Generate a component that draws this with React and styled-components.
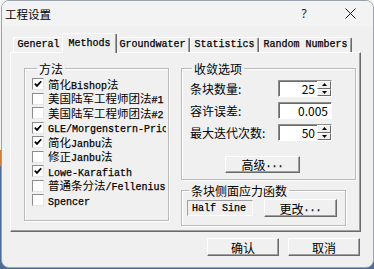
import React from 'react';
import styled, { createGlobalStyle } from 'styled-components';

const GlobalStyle = createGlobalStyle`
  html, body { margin: 0; padding: 0; }
  body {
    width: 374px;
    height: 269px;
    overflow: hidden;
    background: linear-gradient(180deg, #f4f4f4 0, #f4f4f4 150px, #c9803f 150px, #c9803f 166px, #4d6c93 166px);
    font-family: "Noto Sans CJK SC", "Noto Sans", sans-serif;
  }
`;

const Window = styled.div`
  box-sizing: border-box;
  margin-left: 1px;
  width: 373px;
  height: 268px;
  background: #f0f0f0;
  border: 1px solid #9aa3ad;
  border-radius: 8px;
  overflow: hidden;
  display: flex;
  flex-direction: column;
`;

const TitleBar = styled.div`
  flex: none;
  height: 25px;
  display: flex;
  align-items: center;
  background: #f3f3f3;
`;

const Title = styled.div`
  flex: 1;
  padding-left: 3px;
  font-family: "Noto Sans CJK SC", sans-serif;
  font-size: 11.5px;
  color: #000;
`;

const CaptionButton = styled.div`
  width: 46px;
  height: 100%;
  display: flex;
  align-items: center;
  justify-content: center;
  font-family: "Noto Sans", sans-serif;
  font-size: 12px;
  color: #1a1a1a;
`;

const Body = styled.div`
  padding: 7px 0 0 8px;
  display: flex;
  flex-direction: column;
`;

const TabStrip = styled.div`
  position: relative;
  z-index: 1;
  height: 19px;
  display: flex;
  align-items: flex-end;
  padding-left: 3px;
`;

const Tab = styled.div`
  box-sizing: border-box;
  height: ${p => (p.$active ? 20 : 15)}px;
  margin: 0 ${p => (p.$active ? -2 : 0)}px ${p => (p.$active ? -1 : 0)}px;
  padding: 0 ${p => (p.$active ? 5.5 : 3.5)}px 1px;
  display: flex;
  align-items: center;
  background: #f0f0f0;
  border-top: 1px solid #ffffff;
  border-left: 1px solid #ffffff;
  border-right: 1px solid #696969;
  box-shadow: inset -1px 0 0 #a0a0a0;
  border-radius: 2px 2px 0 0;
  position: relative;
  z-index: ${p => (p.$active ? 2 : 1)};
  font-family: "Liberation Mono", monospace;
  font-size: 10px;
  -webkit-text-stroke: 0.25px #000;
  color: #000;
  white-space: nowrap;
`;

const Panel = styled.div`
  box-sizing: border-box;
  width: 351px;
  height: 180px;
  border: 1px solid;
  border-color: #ffffff #696969 #696969 #ffffff;
  box-shadow: inset -1px -1px 0 #a0a0a0;
  padding: 9px 0 0 13px;
  display: flex;
  align-items: flex-start;
  gap: 12px;
`;

const Group = styled.fieldset`
  box-sizing: border-box;
  margin: 0;
  min-width: 0;
  min-inline-size: 0;
  width: ${p => p.$w}px;
  height: ${p => p.$h}px;
  padding: ${p => p.$pad};
  border: 1px solid #b9b9b9;
  box-shadow: 1px 1px 0 #ffffff, inset 1px 1px 0 #ffffff;
`;

const Legend = styled.legend`
  margin-left: ${p => p.$ml || 5}px;
  padding: 0 2px;
  font-family: "Noto Sans CJK SC", sans-serif;
  font-size: 12px;
  line-height: 13px;
  color: #000;
`;

const CheckRow = styled.div`
  height: 14.5px;
  display: flex;
  align-items: center;
  gap: 4px;
`;

const Box = styled.span`
  box-sizing: border-box;
  flex: none;
  width: 12px;
  height: 12px;
  background: #ffffff;
  border: 1px solid;
  border-color: #8d8d8d #e6e6e6 #e6e6e6 #8d8d8d;
  display: flex;
  align-items: center;
  justify-content: center;
`;

const Label = styled.span`
  flex: 1;
  min-width: 0;
  max-width: 118px;
  overflow: hidden;
  white-space: nowrap;
  color: #000;
  line-height: 14px;
`;

const Cjk = styled.span`
  font-family: "Noto Sans CJK SC", sans-serif;
  font-size: ${p => p.$size || 11.5}px;
`;

const Latin = styled.span`
  font-family: "Liberation Mono", monospace;
  font-size: 10px;
  -webkit-text-stroke: 0.25px #000;
`;

const RightCol = styled.div`
  width: 175px;
  display: flex;
  flex-direction: column;
  gap: 4px;
`;

const Fields = styled.div`
  display: grid;
  grid-template-columns: 1fr 54px;
  row-gap: 5px;
  align-items: center;
`;

const FieldLabel = styled.div`
  font-family: "Noto Sans CJK SC", sans-serif;
  font-size: 12px;
  color: #000;
  white-space: nowrap;
`;

const Input = styled.div`
  box-sizing: border-box;
  height: 17px;
  display: flex;
  align-items: stretch;
  background: #ffffff;
  border: 1px solid;
  border-color: #8d8d8d #ffffff #ffffff #8d8d8d;
  box-shadow: inset 1px 1px 0 #6a6a6a;
`;

const Value = styled.div`
  flex: 1;
  display: flex;
  align-items: center;
  justify-content: flex-end;
  padding-right: ${p => (p.$spin ? 2 : 3)}px;
  font-family: "Noto Sans CJK SC", sans-serif;
  font-size: 12px;
  color: #000;
`;

const Spinner = styled.div`
  width: 14px;
  display: flex;
  flex-direction: column;
`;

const SpinBtn = styled.div`
  box-sizing: border-box;
  flex: 1;
  background: #f0f0f0;
  border: 1px solid;
  border-color: #ffffff #696969 #696969 #ffffff;
  display: flex;
  align-items: center;
  justify-content: center;
`;

const Button = styled.div`
  box-sizing: border-box;
  flex: none;
  width: ${p => p.$w}px;
  height: ${p => p.$h || 18}px;
  margin: ${p => p.$m || 0};
  display: flex;
  align-items: center;
  justify-content: center;
  background: #f0f0f0;
  border: 1px solid;
  border-color: #ffffff #696969 #696969 #ffffff;
  box-shadow: inset -1px -1px 0 #a0a0a0;
  font-family: "Noto Sans CJK SC", sans-serif;
  font-size: 12px;
  color: #000;
  white-space: nowrap;
`;

const Row = styled.div`
  display: flex;
  align-items: center;
  gap: 11px;
`;

const StaticBox = styled.div`
  box-sizing: border-box;
  flex: none;
  width: 66px;
  height: 16px;
  display: flex;
  align-items: center;
  padding-left: 4px;
  border: 1px solid;
  border-color: #a0a0a0 #ffffff #ffffff #a0a0a0;
  font-family: "Liberation Mono", monospace;
  font-size: 10px;
  -webkit-text-stroke: 0.25px #000;
  color: #000;
`;

const Footer = styled.div`
  width: 351px;
  margin-top: 6px;
  display: flex;
  justify-content: flex-end;
  gap: 9px;
  padding-right: 1px;
  box-sizing: border-box;
`;

const Mixed = ({ text, size }) =>
  text
    .split(/([\u3000-\u9fff\uff00-\uffef]+)/)
    .filter(Boolean)
    .map((s, i) =>
      /[\u3000-\u9fff\uff00-\uffef]/.test(s) ? (
        <Cjk key={i} $size={size}>{s}</Cjk>
      ) : (
        <Latin key={i}>{s}</Latin>
      )
    );

const Check = () => (
  <svg width="8" height="8" viewBox="0 0 8 8">
    <path d="M0.8 3.6 L3 5.9 L7.2 1.2" fill="none" stroke="#000" strokeWidth="1.7" />
  </svg>
);

const Arrow = ({ up }) => (
  <svg width="5" height="3" viewBox="0 0 5 3">
    <path d={up ? 'M2.5 0 L5 3 L0 3 Z' : 'M0 0 L5 0 L2.5 3 Z'} fill="#000" />
  </svg>
);

const methods = [
  ['简化Bishop法', true],
  ['美国陆军工程师团法#1', false],
  ['美国陆军工程师团法#2', false],
  ['GLE/Morgenstern-Price', true],
  ['简化Janbu法', true],
  ['修正Janbu法', false],
  ['Lowe-Karafiath', true],
  ['普通条分法/Fellenius', false],
  ['Spencer', false],
];

const tabs = ['General', 'Methods', 'Groundwater', 'Statistics', 'Random Numbers'];

const fields = [
  ['条块数量:', '25', true],
  ['容许误差:', '0.005', false],
  ['最大迭代次数:', '50', true],
];

export default function App() {
  return (
    <>
      <GlobalStyle />
      <Window>
        <TitleBar>
          <Title>工程设置</Title>
          <CaptionButton>?</CaptionButton>
          <CaptionButton>
            <svg width="11" height="11" viewBox="0 0 11 11">
              <path d="M0.5 0.5 L10.5 10.5 M10.5 0.5 L0.5 10.5" stroke="#1a1a1a" strokeWidth="1" />
            </svg>
          </CaptionButton>
        </TitleBar>
        <Body>
          <TabStrip>
            {tabs.map(t => (
              <Tab key={t} $active={t === 'Methods'}>{t}</Tab>
            ))}
          </TabStrip>
          <Panel>
            <Group $w={145} $h={159} $pad="2px 0 0 7px">
              <Legend>方法</Legend>
              {methods.map(([name, on]) => (
                <CheckRow key={name}>
                  <Box>{on && <Check />}</Box>
                  <Label><Mixed text={name} /></Label>
                </CheckRow>
              ))}
            </Group>
            <RightCol>
              <Group $w={175} $h={118} $pad="5px 23px 0 8px">
                <Legend $ml={2}>收敛选项</Legend>
                <Fields>
                  {fields.map(([l, v, spin]) => (
                    <React.Fragment key={l}>
                      <FieldLabel>{l}</FieldLabel>
                      <Input>
                        <Value $spin={spin}>{v}</Value>
                        {spin && (
                          <Spinner>
                            <SpinBtn><Arrow up /></SpinBtn>
                            <SpinBtn><Arrow /></SpinBtn>
                          </Spinner>
                        )}
                      </Input>
                    </React.Fragment>
                  ))}
                </Fields>
                <Button $w={75} $h={17} $m="15px 0 0 35px">
                  <Mixed text="高级..." size={12} />
                </Button>
              </Group>
              <Group $w={165} $h={42} $pad="2px 0 0 5px">
                <Legend $ml={2}>条块侧面应力函数</Legend>
                <Row>
                  <StaticBox>Half Sine</StaticBox>
                  <Button $w={73}>
                    <Mixed text="更改..." size={12} />
                  </Button>
                </Row>
              </Group>
            </RightCol>
          </Panel>
          <Footer>
            <Button $w={72}>确认</Button>
            <Button $w={72}>取消</Button>
          </Footer>
        </Body>
      </Window>
    </>
  );
}
